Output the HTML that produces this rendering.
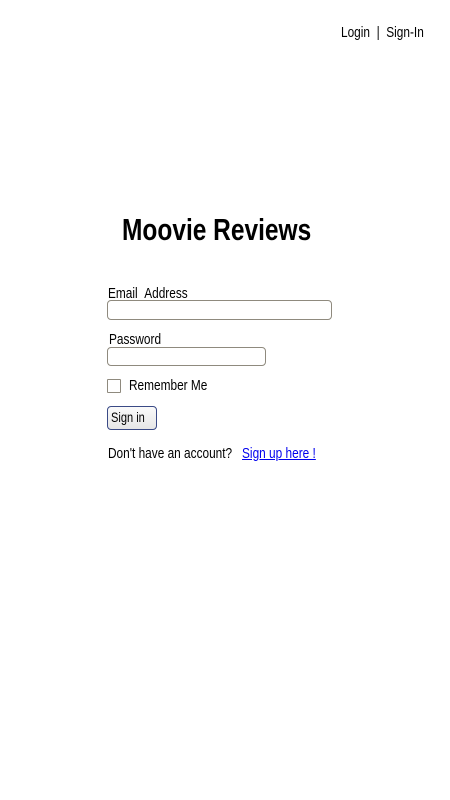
<!DOCTYPE html>
<html><head><style>
body{margin:0;width:450px;height:800px;background:#fff;font-family:"Liberation Sans",sans-serif;color:#000;position:relative;overflow:hidden}
.a{position:absolute;white-space:nowrap;transform:scaleX(0.79);transform-origin:left top}
.inp{position:absolute;border:1.5px solid #8f8a7e;border-radius:4px;box-sizing:border-box;background:#fff}
</style></head><body>
<div class="a" style="left:341px;top:24px;font-size:15px">Login &nbsp;|&nbsp; Sign-In</div>
<div class="a" style="left:122px;top:212px;font-size:31px;font-weight:bold">Moovie Reviews</div>
<div class="a" style="left:108px;top:285px;font-size:15px">Email &nbsp;Address</div>
<div class="inp" style="left:107px;top:300px;width:225px;height:20px"></div>
<div class="a" style="left:109px;top:331px;font-size:15px">Password</div>
<div class="inp" style="left:107px;top:347px;width:159px;height:19px"></div>
<div class="inp" style="left:107px;top:379px;width:14px;height:14px;border-radius:1px"></div>
<div class="a" style="left:129px;top:377px;font-size:15px">Remember Me</div>
<div style="position:absolute;left:107px;top:406px;width:50px;height:24px;box-sizing:border-box;border:1.5px solid #3a4a86;border-radius:4px;background:linear-gradient(#fafafa,#e6e6e6)"></div>
<div class="a" style="left:111px;top:409px;font-size:14px">Sign in</div>
<div class="a" style="left:108px;top:445px;font-size:15px">Don't have an account? &nbsp;&nbsp;<span style="color:#0000ee;text-decoration:underline">Sign up here !</span></div>
</body></html>
